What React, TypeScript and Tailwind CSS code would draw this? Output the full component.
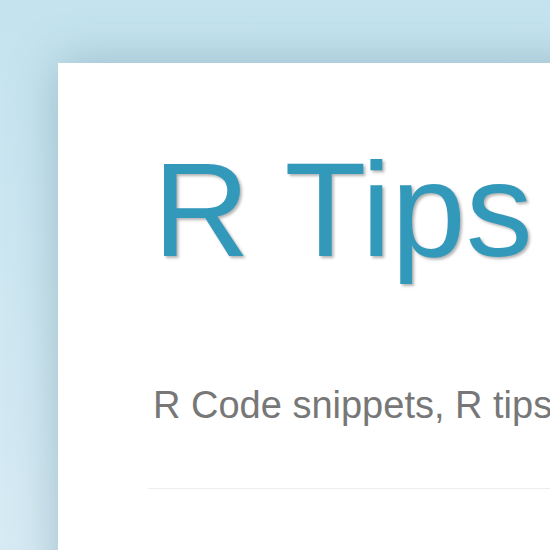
export default function App() {
  return (
    <div className="h-[550px] w-[550px] overflow-hidden bg-gradient-to-b from-[#c4e3ee] to-[#d7ebf4] pl-[58px] pt-[63px] font-['Liberation_Sans',Arial,sans-serif]">
      <div className="h-[800px] w-[1000px] bg-white pl-[90px] pt-[80px] shadow-[0_0_45px_rgba(60,110,130,0.35)]">
        <h1 className="pl-[5px] text-[134px] leading-none text-[#3399bb] [text-shadow:2px_2px_3px_rgba(0,0,0,0.3)]">
          R Tips
        </h1>
        <p className="mt-[109px] pl-[5px] text-[38px] leading-none text-[#777777]">
          R Code snippets, R tips and R tricks
        </p>
        <hr className="mt-[64px] border-t border-[#eeeeee]" />
      </div>
    </div>
  );
}
